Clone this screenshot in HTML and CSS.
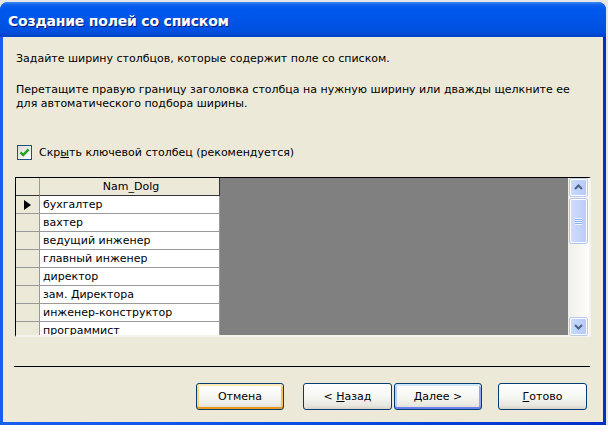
FILE: index.html
```html
<!DOCTYPE html>
<html lang="ru">
<head>
	<meta charset="UTF-8">
	<title>Создание полей со списком</title>
	<link rel="stylesheet" href="styles.css">
</head>
<body>
	<div class="window">
		<div class="titlebar">
			<span class="title">Создание полей со списком</span>
		</div>
		<div class="client">
			<p class="intro">Задайте ширину столбцов, которые содержит поле со списком.</p>
			<p class="hint">Перетащите правую границу заголовка столбца на нужную ширину или дважды щелкните ее<br>для автоматического подбора ширины.</p>
			<label class="check">
				<span class="box">
					<svg width="15" height="15" viewBox="0 0 15 15">
						<path d="M3.5 7.3 L6.2 10 L11.6 4.4" fill="none" stroke="#21a121" stroke-width="2.4"/>
					</svg>
				</span>
				<span class="check-text">Скр<u>ы</u>ть ключевой столбец (рекомендуется)</span>
			</label>
			<div class="sheet">
				<div class="datasheet">
					<div class="row head">
						<div class="sel"></div>
						<div class="cell">Nam_Dolg</div>
					</div>
					<div class="row">
						<div class="sel current"><span class="arrow"></span></div>
						<div class="cell">бухгалтер</div>
					</div>
					<div class="row"><div class="sel"></div><div class="cell">вахтер</div></div>
					<div class="row"><div class="sel"></div><div class="cell">ведущий инженер</div></div>
					<div class="row"><div class="sel"></div><div class="cell">главный инженер</div></div>
					<div class="row"><div class="sel"></div><div class="cell">директор</div></div>
					<div class="row"><div class="sel"></div><div class="cell">зам. Директора</div></div>
					<div class="row"><div class="sel"></div><div class="cell">инженер-конструктор</div></div>
					<div class="row"><div class="sel"></div><div class="cell">программист</div></div>
				</div>
				<div class="vscroll">
					<div class="sbtn">
						<svg width="17" height="17" viewBox="0 0 17 17"><polyline points="5,10 8.5,6.5 12,10" fill="none" stroke="#4d6185" stroke-width="2"/></svg>
					</div>
					<div class="thumb"><span class="grip"></span></div>
					<div class="track"></div>
					<div class="sbtn">
						<svg width="17" height="17" viewBox="0 0 17 17"><polyline points="5,7 8.5,10.5 12,7" fill="none" stroke="#4d6185" stroke-width="2"/></svg>
					</div>
				</div>
			</div>
			<div class="separator"></div>
			<div class="buttons">
				<button class="btn hot">Отмена</button>
				<button class="btn back">&lt; <u>Н</u>азад</button>
				<button class="btn default"><u>Д</u>алее &gt;</button>
				<button class="btn finish"><u>Г</u>отово</button>
			</div>
		</div>
	</div>
</body>
</html>
```

FILE: styles.css
```css
/* reset */
* {
	margin: 0;
	padding: 0;
	box-sizing: border-box;
}
body {
	background: #e6e6e6;
	font-family: "DejaVu Sans", Tahoma, sans-serif;
	font-size: 11px;
	color: #000;
}
.window {
	width: 606px;
	height: 423px;
	margin-top: 2px;
	display: flex;
	flex-direction: column;
	background: linear-gradient(to right, #1a5ef0, #0a4ee6 50%, #0030c8);
	border-radius: 8px 8px 0 0;
	overflow: hidden;
}
.titlebar {
	height: 35px;
	display: flex;
	align-items: center;
	padding: 3px 0 0 8px;
	background: linear-gradient(to bottom, #3d8af7 0, #0d61ea 3px, #0058ee 7px, #0055e6 55%, #0050df 85%, #0042c4 100%);
}
.title {
	color: #fff;
	font-family: "DejaVu Sans", sans-serif;
	font-weight: bold;
	font-size: 14px;
	letter-spacing: -0.2px;
	text-shadow: 1px 1px 0 #0a1a7a;
}
.client {
	flex: 1;
	margin: 0 3px 3px;
	background: #ece9d8;
	padding: 15px 12px 0 13px;
	display: flex;
	flex-direction: column;
}
.intro, .hint {
	line-height: 14px;
	white-space: nowrap;
}
.hint {
	margin-top: 17px;
}
.check {
	margin-top: 34px;
	height: 15px;
	display: flex;
	align-items: center;
	gap: 7px;
	padding-left: 1px;
}
.check-text {
	white-space: nowrap;
}
.box {
	width: 15px;
	height: 15px;
	border: 1px solid #1c5180;
	background: linear-gradient(135deg, #dcdcd5, #fff);
	position: relative;
}
.box svg {
	position: absolute;
	left: -1px;
	top: -1px;
}
.sheet {
	margin: 17px 0 0 -1px;
	height: 160px;
	display: flex;
	border-top: 1px solid #000;
	border-left: 1px solid #000;
	border-right: 2px solid #f4f3ee;
	border-bottom: 2px solid #f4f3ee;
	background: #f4f3ee;
}
.datasheet {
	flex: 1;
	background: #808080;
	overflow: hidden;
}
.row {
	display: flex;
	height: 18px;
}
.sel {
	width: 24px;
	background: #ece9d8;
	border-right: 1px solid #999;
	border-bottom: 1px solid #999;
	display: flex;
	align-items: center;
	padding-left: 8px;
}
.cell {
	width: 180px;
	background: #fff;
	border-right: 1px solid #999;
	border-bottom: 1px solid #999;
	padding-left: 3px;
	line-height: 17px;
	white-space: nowrap;
	overflow: hidden;
}
.head .cell {
	background: #ece9d8;
	text-align: center;
	border-right-color: #333;
	border-bottom-color: #333;
}
.head .sel {
	border-bottom-color: #333;
}
.arrow {
	width: 0;
	height: 0;
	border-top: 5px solid transparent;
	border-bottom: 5px solid transparent;
	border-left: 7px solid #000;
}
.vscroll {
	width: 21px;
	display: flex;
	flex-direction: column;
	padding: 1px 2px 0 2px;
	background: linear-gradient(to right, #f0efe8, #fefefb);
}
.sbtn {
	height: 17px;
	border: 1px solid #fff;
	border-radius: 2px;
	background: linear-gradient(to right, #c9d8fc, #b6cbfa);
	box-shadow: 0 0 0 1px #b9c9ef;
}
.sbtn svg {
	display: block;
	margin: -1px 0 0 -1px;
}
.thumb {
	height: 44px;
	margin-top: 3px;
	border: 1px solid #fff;
	border-radius: 2px;
	background: linear-gradient(to right, #cfdcfd, #b9cdfb);
	box-shadow: 0 0 0 1px #b2c4ee;
	display: flex;
	align-items: center;
	justify-content: center;
}
.grip {
	width: 7px;
	height: 7px;
	background: repeating-linear-gradient(to bottom, #eef4fe 0, #eef4fe 1px, #8cb0f8 1px, #8cb0f8 2px);
}
.track {
	flex: 1;
}
.separator {
	height: 1px;
	background: #000;
	margin: 29px 1px 0 -2px;
}
.buttons {
	margin-top: 16px;
	display: flex;
	justify-content: flex-end;
	padding-right: 4px;
}
.btn {
	width: 88px;
	height: 27px;
	border: 1px solid #003c74;
	border-radius: 3px;
	background: linear-gradient(to bottom, #fff, #f5f5f1 55%, #e8e7e0 85%, #d8d4c8);
	font-family: "DejaVu Sans", Tahoma, sans-serif;
	font-size: 11px;
	color: #000;
}
.btn.hot {
	box-shadow: inset 0 2px 0 #fee9b4, inset 0 -2px 0 #e69a1a, inset 2px 0 0 #fcd67a, inset -2px 0 0 #f8c252;
}
.btn.default {
	box-shadow: inset 0 2px 0 #cee7ff, inset 0 -2px 0 #6982ee, inset 2px 0 0 #bccefc, inset -2px 0 0 #8ea7f4;
}
.back {
	width: 89px;
	margin-left: 19px;
}
.default {
	margin-left: 2px;
}
.finish {
	width: 89px;
	margin-left: 16px;
}
```
